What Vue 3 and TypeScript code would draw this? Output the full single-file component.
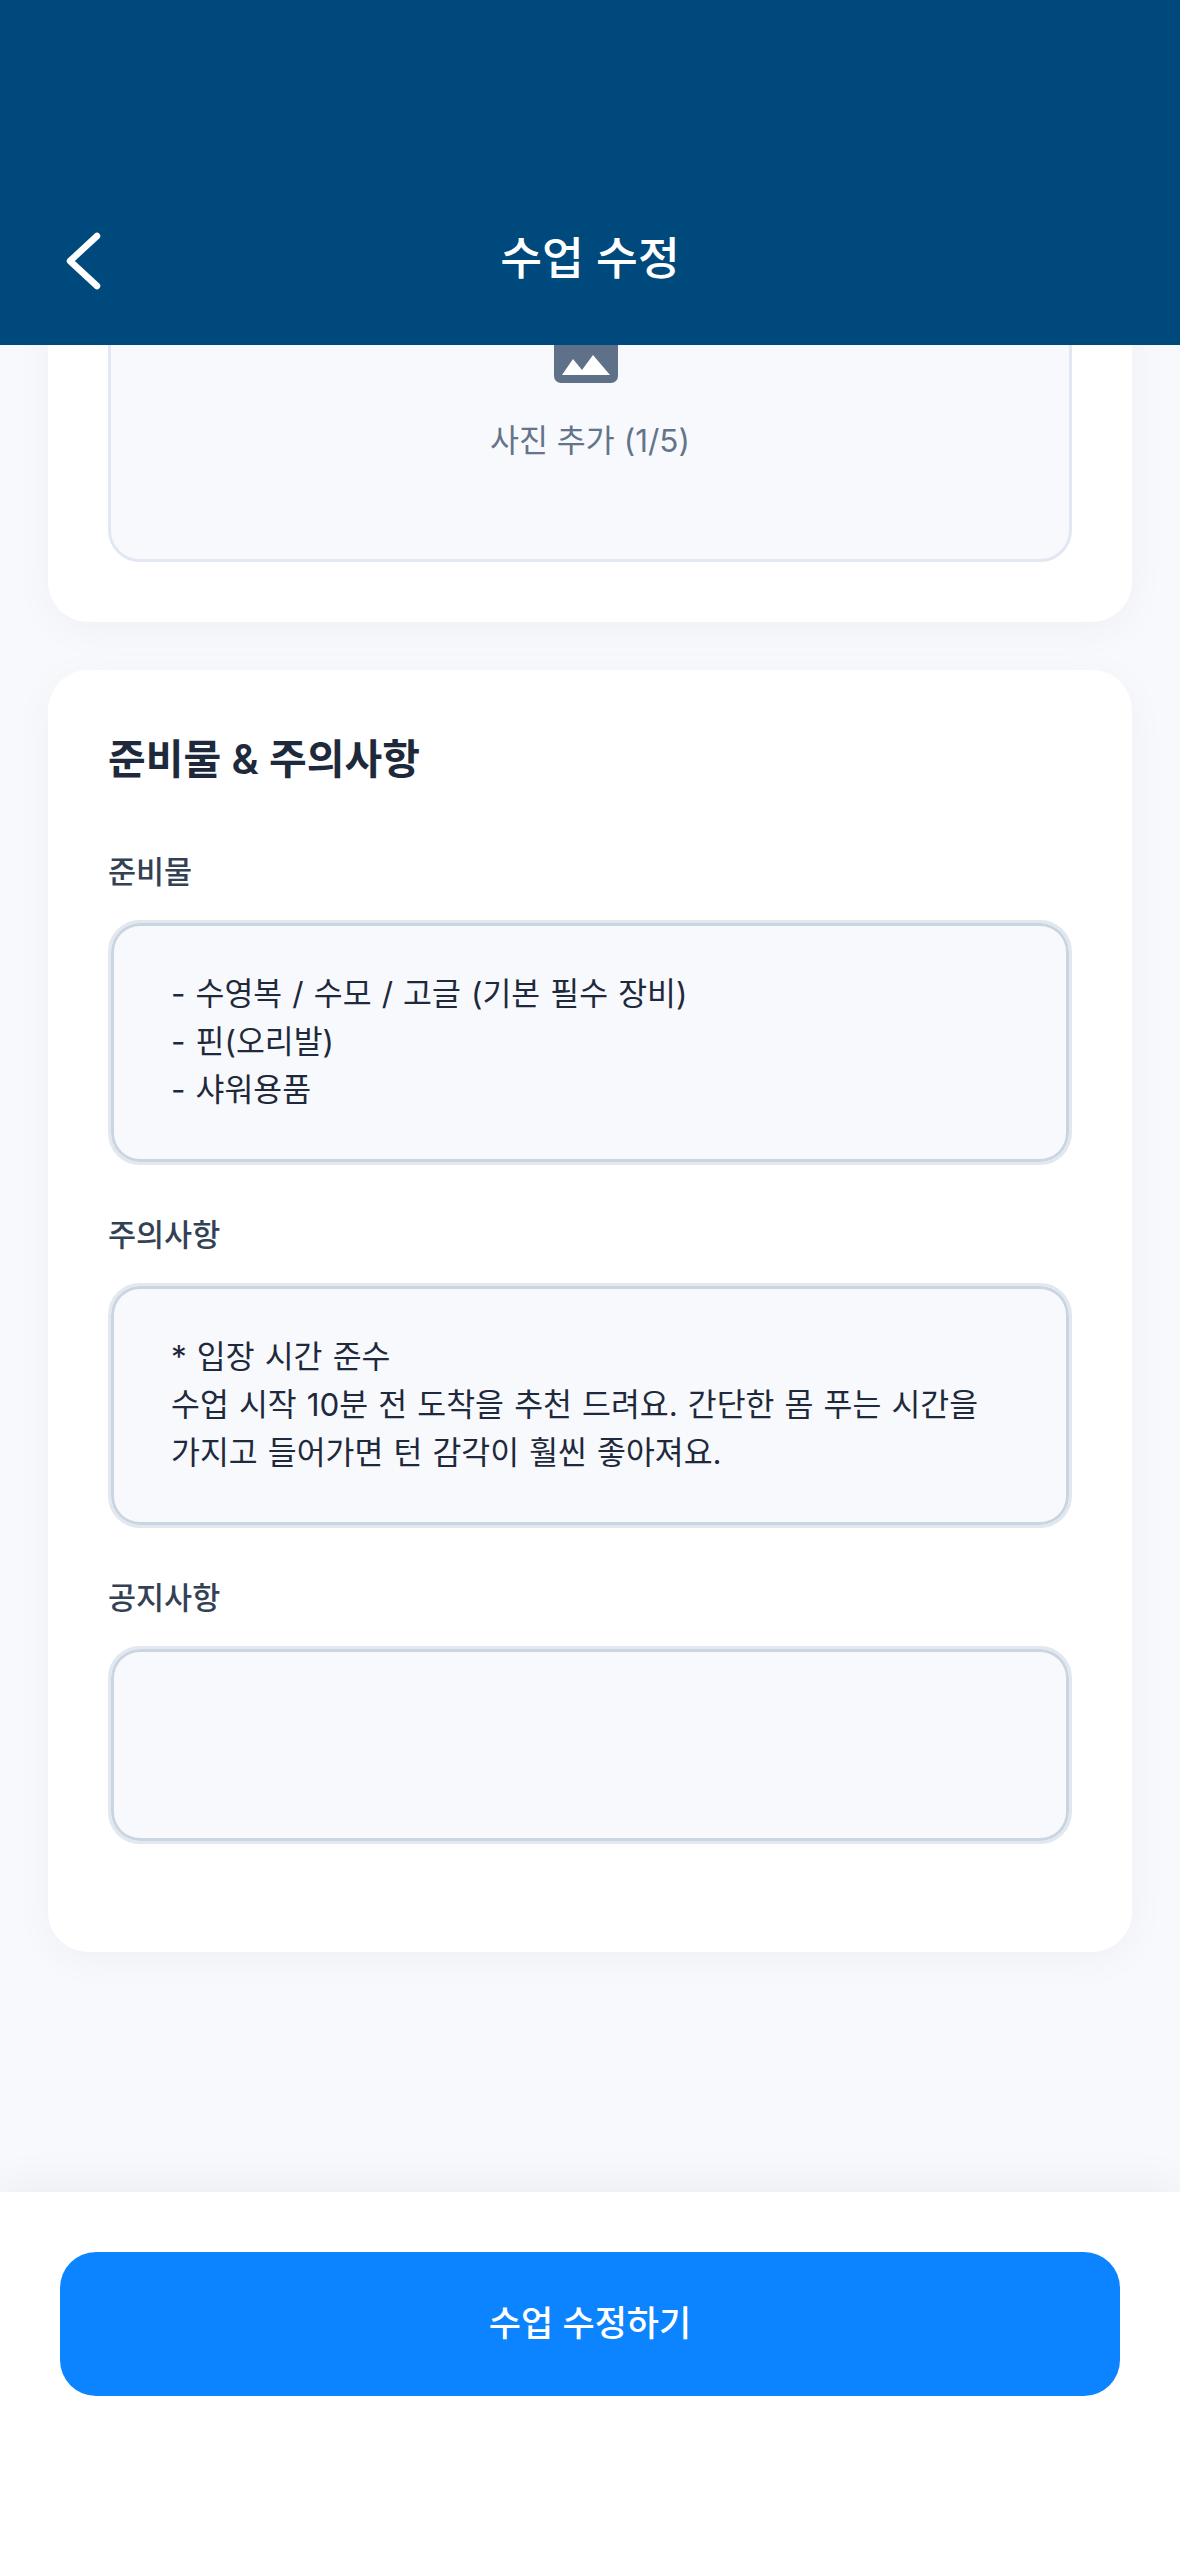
<script setup lang="ts">
interface Field {
  label: string
  lines: string[]
  tall: boolean
}
const fields: Field[] = [
  { label: '준비물', lines: ['- 수영복 / 수모 / 고글 (기본 필수 장비)', '- 핀(오리발)', '- 샤워용품'], tall: true },
  { label: '주의사항', lines: ['* 입장 시간 준수', '수업 시작 10분 전 도착을 추천 드려요. 간단한 몸 푸는 시간을', '가지고 들어가면 턴 감각이 훨씬 좋아져요.'], tall: true },
  { label: '공지사항', lines: [], tall: false },
]
</script>

<template>
  <div class="app">
    <header class="header">
      <svg class="back" width="60" height="70" viewBox="0 0 60 70" fill="none">
        <path d="M47 10 L20 35 L47 60" stroke="#fff" stroke-width="6.5" stroke-linecap="round" stroke-linejoin="round" />
      </svg>
      <h1 class="title">수업 수정</h1>
    </header>
    <main class="main">
      <section class="card first">
        <div class="drop">
          <svg class="pic" width="64" height="100" viewBox="0 0 64 100">
            <rect x="0" y="0" width="64" height="100" rx="7" fill="#5f7189" />
            <path d="M8 92 L19 76 L28 87 L39 72 L56 92 Z" fill="#fff" />
          </svg>
          <span class="drop-text">사진 추가 (1/5)</span>
        </div>
      </section>
      <section class="card">
        <h2 class="section-title">준비물 &amp; 주의사항</h2>
        <div v-for="f in fields" :key="f.label" class="field">
          <div class="label">{{ f.label }}</div>
          <div class="box" :class="{ short: !f.tall }">
            <div v-for="l in f.lines" :key="l" class="line">{{ l }}</div>
          </div>
        </div>
      </section>
    </main>
    <footer class="footer">
      <button class="submit">수업 수정하기</button>
    </footer>
  </div>
</template>

<style>
html, body { margin: 0; background: #f8f9fd; }
</style>

<style scoped>
.app {
  width: 1180px;
  height: 2558px;
  display: flex;
  flex-direction: column;
  background: #f8f9fd;
  overflow: hidden;
  font-family: Inter, "Noto Sans CJK KR", sans-serif;
}
.header {
  height: 345px;
  flex: none;
  background: #00497c;
  position: relative;
  z-index: 2;
  display: flex;
  align-items: flex-end;
  justify-content: center;
  box-sizing: border-box;
  padding-bottom: 57px;
}
.back { position: absolute; left: 50px; top: 226px; }
.title {
  margin: 0;
  color: #fff;
  font-size: 45.5px;
  line-height: 58px;
  font-weight: 500;
}
.main {
  flex: 1;
  min-height: 0;
  display: flex;
  flex-direction: column;
  justify-content: flex-end;
  gap: 48px;
  padding: 0 48px 240px;
}
.card {
  flex: none;
  background: #fff;
  border-radius: 40px;
  padding: 60px;
  box-shadow: 0 8px 40px rgba(0, 0, 0, 0.04);
}
.first { padding-bottom: 60px; }
.drop {
  height: 300px;
  box-sizing: border-box;
  border: 3px solid #e2e8f3;
  border-radius: 32px;
  background: #f8f9fd;
  display: flex;
  flex-direction: column;
  align-items: center;
  justify-content: flex-end;
  gap: 36px;
  padding-bottom: 96px;
}
.pic { flex: none; margin-right: 8px; }
.drop-text { color: #64748b; font-size: 31.5px; line-height: 44px; }
.section-title {
  margin: 0 0 62px;
  font-size: 41px;
  line-height: 58px;
  font-weight: 600;
  color: #1e293b;
}
.field { margin-bottom: 48px; }
.label {
  font-size: 30.5px;
  line-height: 44px;
  font-weight: 500;
  color: #334155;
  margin-bottom: 26px;
}
.box {
  height: 245px;
  box-sizing: border-box;
  border: 3px solid #e2e8f0;
  border-radius: 32px;
  background: #f8f9fd;
  box-shadow: inset 0 0 0 3px #cbd5e1;
  padding: 47px 60px;
  font-size: 31.4px;
  word-spacing: 1.3px;
  line-height: 48px;
  color: #1e293b;
}
.box.short { height: 198px; }
.footer {
  flex: none;
  height: 366px;
  box-sizing: border-box;
  background: #fff;
  padding: 60px 60px 0;
  position: relative;
  box-shadow: 0 -8px 40px rgba(0, 0, 0, 0.05);
}
.submit {
  width: 100%;
  height: 144px;
  border: 0;
  border-radius: 36px;
  background: #0d84ff;
  color: #fff;
  font: inherit;
  font-size: 35px;
  font-weight: 500;
  padding: 0 0 8px;
}
</style>
